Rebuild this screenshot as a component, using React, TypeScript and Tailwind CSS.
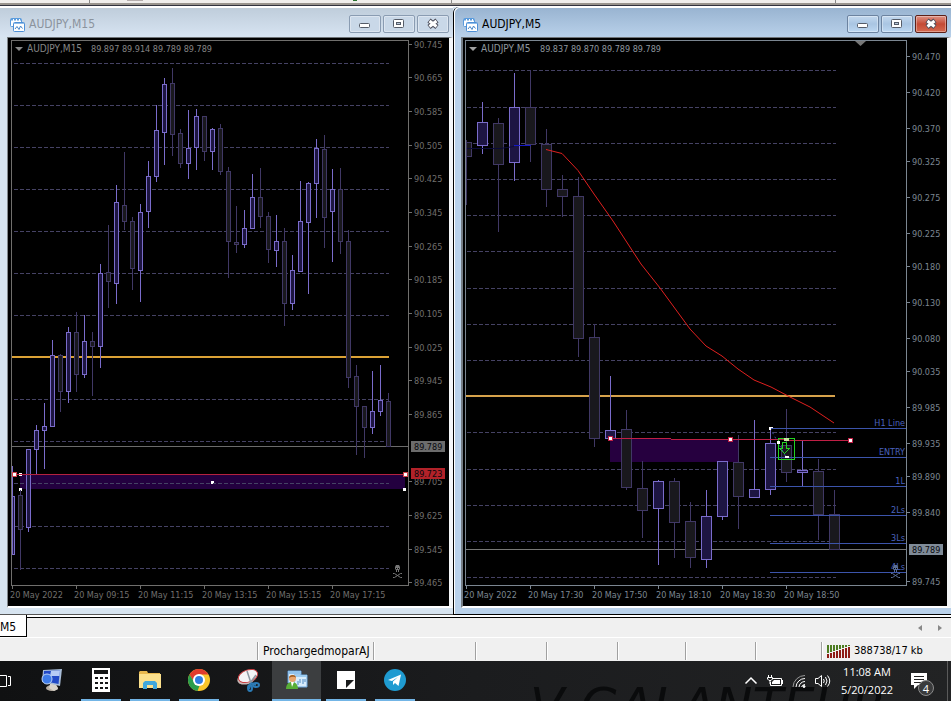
import React from 'react';
import clsx from 'clsx';

type Candle = [high: number, top: number, bottom: number, low: number, up: 0 | 1];
type Label = [position: number, text: string];

const m15Candles: Candle[] = [
  [466, 496, 554, 554, 1], [489, 495, 529, 569, 0], [449, 449, 527, 531, 1], [425, 430, 449, 473, 1],
  [403, 426, 430, 468, 1], [340, 355, 426, 426, 1], [354, 355, 391, 411, 0], [327, 332, 391, 402, 1],
  [312, 332, 374, 391, 0], [315, 341, 374, 377, 1], [332, 341, 346, 395, 0], [264, 273, 346, 367, 1],
  [225, 272, 281, 307, 0], [185, 202, 283, 303, 1], [152, 205, 221, 229, 0], [217, 221, 268, 289, 0],
  [204, 212, 270, 301, 1], [161, 176, 211, 227, 1], [105, 130, 176, 181, 1], [78, 84, 132, 164, 1],
  [68, 83, 134, 155, 0], [129, 133, 163, 167, 0], [110, 148, 163, 178, 1], [109, 116, 147, 169, 1],
  [116, 116, 151, 160, 0], [128, 129, 151, 169, 1], [124, 128, 171, 174, 0], [167, 171, 241, 277, 0],
  [206, 242, 244, 252, 0], [210, 228, 244, 247, 1], [174, 197, 228, 228, 1], [168, 197, 216, 227, 0],
  [212, 216, 249, 262, 0], [215, 241, 250, 266, 1], [228, 241, 303, 325, 0], [255, 270, 303, 309, 1],
  [181, 221, 271, 271, 1], [182, 183, 222, 293, 1], [139, 148, 183, 217, 1], [135, 149, 217, 247, 0],
  [169, 189, 211, 261, 1], [168, 189, 241, 253, 0], [230, 241, 377, 387, 0], [365, 376, 406, 454, 0],
  [406, 406, 427, 457, 0], [371, 411, 427, 433, 1], [365, 400, 411, 415, 1], [393, 401, 446, 446, 0],
];

const m5Candles: Candle[] = [
  [140, 142, 156, 204, 0], [102, 122, 145, 153, 1], [118, 123, 164, 231, 0], [73, 107, 162, 180, 1],
  [70, 107, 144, 161, 0], [129, 144, 189, 206, 0], [175, 189, 196, 216, 0], [177, 196, 338, 356, 0],
  [324, 337, 438, 446, 0], [376, 430, 438, 438, 1], [410, 429, 487, 489, 0], [461, 488, 510, 537, 0],
  [480, 481, 508, 564, 1], [478, 481, 522, 557, 0], [502, 521, 557, 567, 0], [490, 516, 559, 567, 1],
  [461, 461, 516, 519, 1], [435, 462, 496, 528, 0], [420, 489, 497, 497, 1], [428, 443, 489, 494, 1],
  [409, 445, 472, 481, 0], [440, 470, 472, 486, 1], [459, 471, 514, 539, 0], [490, 514, 549, 549, 0],
];

const m15Grid = [63, 105, 147, 189, 231, 273, 315, 399, 441, 483, 526, 568];
const m5Grid = [70, 107, 143, 179, 215, 251, 288, 324, 360, 432, 469, 505, 541, 577];

const m15Prices: Label[] = [
  [44, '90.745'], [77, '90.665'], [111, '90.585'], [145, '90.505'], [178, '90.425'], [212, '90.345'],
  [246, '90.265'], [279, '90.185'], [313, '90.105'], [347, '90.025'], [380, '89.945'], [414, '89.865'],
  [481, '89.705'], [515, '89.625'], [549, '89.545'], [582, '89.465'],
];
const m5Prices: Label[] = [
  [56, '90.470'], [92, '90.420'], [128, '90.370'], [161, '90.325'], [197, '90.275'], [233, '90.225'],
  [266, '90.180'], [302, '90.130'], [338, '90.080'], [371, '90.035'], [407, '89.985'], [443, '89.935'],
  [476, '89.890'], [512, '89.840'], [581, '89.745'],
];

const m15Times: Label[] = [
  [12, '20 May 2022'], [76, '20 May 09:15'], [140, '20 May 11:15'],
  [204, '20 May 13:15'], [268, '20 May 15:15'], [332, '20 May 17:15'],
];
const m5Times: Label[] = [
  [466, '20 May 2022'], [530, '20 May 17:30'], [594, '20 May 17:50'],
  [658, '20 May 18:10'], [722, '20 May 18:30'], [786, '20 May 18:50'],
];

const levels: Label[] = [
  [428, 'H1 Line'], [457, 'ENTRY'], [486, '1L'], [515, '2Ls'], [543, '3Ls'], [572, '4Ls'],
];

const chartFont = "font-['DejaVu_Sans_Condensed','Noto_Sans',sans-serif] text-[9px]";
const uiFont = "font-['DejaVu_Sans_Condensed','Noto_Sans',sans-serif]";

const Candles: React.FC<{ data: Candle[]; start: number; step: number; half: number }> = ({ data, start, step, half }) => (
  <g shapeRendering="crispEdges">
    {data.map(([high, top, bottom, low, up], i) => {
      const x = start + i * step;
      const left = i === 0 ? x : x - half;
      const stroke = up ? '#7a6ccb' : '#403865';
      return (
        <g key={i}>
          <rect x={x} y={high} width={1} height={low - high + 1} fill={stroke} />
          <rect
            x={left + 0.5}
            y={top + 0.5}
            width={x + half - left}
            height={Math.max(bottom - top, 1)}
            fill={up ? '#1d1542' : '#19181d'}
            stroke={stroke}
          />
        </g>
      );
    })}
  </g>
);

const Grid: React.FC<{ rows: number[]; from: number; to: number }> = ({ rows, from, to }) => (
  <g stroke="#454264" strokeDasharray="4 2" shapeRendering="crispEdges">
    {rows.map(y => (
      <line key={y} x1={from} x2={to} y1={y + 0.5} y2={y + 0.5} />
    ))}
  </g>
);

interface AxesProps {
  left: number;
  right: number;
  prices: Label[];
  times: Label[];
  color: string;
}

const Axes: React.FC<AxesProps> = ({ left, right, prices, times, color }) => (
  <g>
    <g fill="none" stroke={color} shapeRendering="crispEdges">
      <path d={`M${left + 0.5} 585.5V40.5H${right + 0.5}V585.5Z`} />
      {prices.map(([y]) => (
        <path key={y} d={`M${right} ${y + 0.5}h4`} />
      ))}
      {times.map(([x]) => (
        <path key={x} d={`M${x + 0.5} 585v4`} />
      ))}
    </g>
    <g fill={color}>
      {prices.map(([y, text]) => (
        <text key={y} x={right + 6} y={y + 4}>{text}</text>
      ))}
      {times.map(([x, text]) => (
        <text key={x} x={x - 2} y={598}>{text}</text>
      ))}
    </g>
  </g>
);

const PriceTag: React.FC<{ x: number; y: number; fill: string; text: string }> = ({ x, y, fill, text }) => (
  <g>
    <rect x={x} y={y} width={34} height={11} fill={fill} />
    <text x={x + 3} y={y + 9} fill="#08080c">{text}</text>
  </g>
);

const Handle: React.FC<{ x: number; y: number; stroke?: string }> = ({ x, y, stroke = 'none' }) => (
  <rect x={x - 1.5} y={y - 1.5} width={4} height={4} fill="#fff" stroke={stroke} shapeRendering="crispEdges" />
);

const Skull: React.FC<{ x: number; y: number; color: string }> = ({ x, y, color }) => (
  <g transform={`translate(${x} ${y})`} fill="none" stroke={color}>
    <path d="M2 2L3 0H6L7 2V4L6 5V7H3V5L2 4Z" fill={color} stroke="none" />
    <path d="M3 3.500h1M5 3.500h1M4.500 5v2" stroke="#000" />
    <path d="M0 8.500h1.500L7.500 12.500H9M9 8.500H7.500L1.500 12.500H0" />
  </g>
);

const M15Chart: React.FC = () => (
  <svg viewBox="8 38 441 568" className={clsx('block h-auto w-full bg-black', chartFont)} role="img" aria-label="AUDJPY M15 chart">
    <rect x={20} y={474} width={385} height={15} fill="#23003f" />
    <Grid rows={m15Grid} from={14} to={389} />
    <rect x={12} y={356} width={377} height={2} fill="#dba236" />
    <rect x={12} y={446} width={396} height={1} fill="#6b6b6b" />
    <Candles data={m15Candles} start={12} step={8} half={2} />
    <rect x={12} y={474} width={393} height={1} fill="#b5223f" />
    <Handle x={14} y={474} stroke="#d0404a" />
    <Handle x={405} y={474} stroke="#d0404a" />
    <path d="M19 473h3v1h-3ZM19 475h3v1h-3ZM19 488h3v3h-1v-1h-1v1h-1ZM211 481h3v2h-1v1h-2ZM403 488h3v3h-3Z" fill="#fff" />
    <Axes left={11} right={408} prices={m15Prices} times={m15Times} color="#706f6d" />
    <PriceTag x={411} y={441} fill="#6c6c6c" text="89.789" />
    <PriceTag x={411} y={468} fill="#b22229" text="89.723" />
    <path d="M15 47h8l-4 4Z" fill="#8a8a8a" />
    <g fill="#858585">
      <text x={27} y={52} className="text-[10px]">AUDJPY,M15</text>
      <text x={91} y={52}>89.897 89.914 89.789 89.789</text>
    </g>
    <Skull x={393} y={565} color="#777" />
  </svg>
);

const M5Chart: React.FC = () => (
  <svg viewBox="463 38 484 568" className={clsx('block h-auto w-full bg-black', chartFont)} role="img" aria-label="AUDJPY M5 chart">
    <Grid rows={m5Grid} from={467} to={836} />
    <rect x={610} y={439} width={128} height={23} fill="#26003f" />
    <rect x={466} y={395} width={369} height={2} fill="#d6a24b" />
    <rect x={466} y={549} width={440} height={1} fill="#777" />
    <Candles data={m5Candles} start={466} step={16} half={5} />
    <path d="M467 148.500H500L514 146.500" fill="none" stroke="#0b0b38" />
    <path d="M514 145.500H531" stroke="#1418c8" />
    <path
      d="M546 149.500L562 153.500L578 170.500L594 194L613 221L641 264L660 288L690 329L706 346L722 356L738 369L754 380L771 387L790 397L810 407L834 423"
      fill="none"
      stroke="#e0201f"
    />
    {levels.map(([y, text]) => (
      <g key={text}>
        <rect x={770} y={y} width={136} height={1} fill="#3c54ab" />
        <text x={905} y={y - 2} textAnchor="end" fill="#4a62bd">{text}</text>
      </g>
    ))}
    <g stroke="#c01f45" shapeRendering="crispEdges">
      <path d="M610 438.500H671M785 440.500H850" />
      <path d="M671 439.500H785" />
    </g>
    <Handle x={610} y={438} stroke="#c01f45" />
    <Handle x={730} y={439} stroke="#c01f45" />
    <Handle x={850} y={440} stroke="#c01f45" />
    <path d="M770 428L786 457" stroke="#3c54ab" strokeDasharray="2 3" />
    <g fill="none" stroke="#22d322" shapeRendering="crispEdges">
      <rect x={778.5} y={438.500} width={16} height={21} />
      <path d="M782.500 442.500H786.500V448.500H789.500L784.500 453.500L779.500 448.500H782.500Z" />
    </g>
    <path d="M769 427h4v1h-2v2h-2ZM777 441h3v3h-3ZM785 456h4v2h-4Z" fill="#fff" />
    <rect x={784} y={438} width={5} height={3} fill="#c8e6a0" />
    <Axes left={465} right={906} prices={m5Prices} times={m5Times} color="#7b8691" />
    <PriceTag x={909} y={544} fill="#7f8b98" text="89.789" />
    <path d="M855 41h11l-5.500 5Z" fill="#777" />
    <path d="M469 47h8l-4 4Z" fill="#a0a0a0" />
    <g fill="#8e979f">
      <text x={481} y={52} className="text-[10px]">AUDJPY,M5</text>
      <text x={540} y={52}>89.837 89.870 89.789 89.789</text>
    </g>
    <Skull x={891} y={565} color="#5a6d95" />
  </svg>
);

const ChartIcon: React.FC = () => (
  <svg width="15" height="15" viewBox="0 0 15 15" fill="none" aria-hidden="true">
    <rect x=".5" y="1.500" width="11" height="8" rx="1" fill="#fff" stroke="#5b9bdc" />
    <path d="M1 2.500h10" stroke="#5b9bdc" strokeWidth="2" strokeDasharray="2 1" />
    <rect x="3.500" y="5.500" width="11" height="9" rx="1" fill="#fff" stroke="#4d8fd6" />
    <path d="M4 6.500h10" stroke="#8fbdea" />
    <path d="M5 12L7 9.500L9 12.500L10.500 9L12.500 11.500" stroke="#4384c8" />
  </svg>
);

const WindowButtons: React.FC<{ active?: boolean }> = ({ active }) => {
  const base = 'flex h-[18px] w-8 items-center justify-center rounded-[2px] border shadow-[inset_0_0_0_1px_rgba(255,255,255,0.35)]';
  const plain = active
    ? 'border-[#6c83a0] bg-linear-to-b from-[#c3d8ee] via-[#a9c5e2] to-[#bdd8f2]'
    : 'border-[#8a9cb2] bg-[#c9d8e8]';
  return (
    <div className="flex gap-[2px]">
      <button type="button" aria-label="Minimize" className={clsx(base, plain)}>
        <svg width="12" height="12" viewBox="0 0 12 12" aria-hidden="true">
          <rect x=".5" y="5.500" width="10" height="4" rx="1" fill="#fff" stroke="#555c68" />
        </svg>
      </button>
      <button type="button" aria-label="Restore" className={clsx(base, plain)}>
        <svg width="12" height="12" viewBox="0 0 12 12" aria-hidden="true">
          <rect x=".5" y="1.500" width="10" height="8" rx="1" fill="#fff" stroke="#555c68" />
          <rect x="3.500" y="4.500" width="4" height="2" fill="#b8c8da" stroke="#555c68" />
        </svg>
      </button>
      <button
        type="button"
        aria-label="Close"
        className={clsx(base, active ? 'border-[#5d2018] bg-linear-to-b from-[#dd9184] via-[#c44a35] to-[#d5694f]' : plain)}
      >
        <svg width="12" height="12" viewBox="0 0 12 12" aria-hidden="true">
          <path d="M2 2.500L10 9M10 2.500L2 9" stroke="#4c4e5b" strokeWidth="5" />
          <path d="M2.500 3L9.500 8.500M9.500 3L2.500 8.500" stroke="#fff" strokeWidth="3" />
        </svg>
      </button>
    </div>
  );
};

interface ChartWindowProps {
  title: string;
  active?: boolean;
  children: React.ReactNode;
}

const ChartWindow: React.FC<ChartWindowProps> = ({ title, active, children }) => (
  <section
    className={clsx(
      'flex flex-col border-b',
      active ? 'rounded-tl-md border-l border-black bg-[#b9d1ea]' : 'border-[#555] bg-[#d7e4f0]',
    )}
  >
    <header
      className={clsx(
        'flex h-[30px] items-center border-t border-white pt-[3px] pr-1',
        active
          ? 'rounded-tl-md border-l bg-linear-to-b from-[#99b4d1] to-[#b9d1ea] pl-2'
          : 'bg-linear-to-b from-[#bfcddb] to-[#d7e4f2] pl-[10px]',
      )}
    >
      <ChartIcon />
      <h2 className={clsx('ml-1 flex-1 text-xs', uiFont, active ? 'text-black' : 'text-[#8b939d]')}>{title}</h2>
      <WindowButtons active={active} />
    </header>
    <div className={clsx('pb-[6px]', active ? 'border-l border-white pl-[6px]' : 'pl-[7px]')}>
      <div
        className={clsx(
          'border-t border-r-4 border-b-2 border-t-[#6f7478] border-r-[#f4f6f8] border-b-white',
          active ? 'border-l-2 border-l-[#747c84]' : 'border-l border-l-[#83888c]',
        )}
      >
        {children}
      </div>
    </div>
  </section>
);

const Signal: React.FC = () => (
  <svg width="24" height="14" viewBox="0 0 24 14" shapeRendering="crispEdges" aria-hidden="true">
    {[0, 1, 2, 3, 4, 5, 6, 7].map(i => (
      <g key={i}>
        <rect x={i * 3} y={1} width={2} height={8 - i} fill="#4d7d21" />
        <rect x={i * 3} y={10 - i} width={2} height={4 + i} fill="#8f1c16" />
      </g>
    ))}
  </svg>
);

const ComputerIcon = () => (
  <svg width="24" height="26" viewBox="0 0 24 26">
    <ellipse cx="12" cy="21" rx="6" ry="3" fill="#b9b0a4" />
    <path d="M10 17h6l2 5-4 2-5-3Z" fill="#d9d3ca" />
    <path d="M3 3L22 2L20 19L2 15Z" fill="#a9bdd8" />
    <path d="M4 4L20 3.500L18.500 17L3.500 14Z" fill="#2149c6" />
    <path d="M11 4L20 3.500L19.500 9L10 9Z" fill="#b6cbf5" />
    <circle cx="7" cy="12" r="5" fill="#3e7be8" stroke="#bcd3f7" />
  </svg>
);

const CalculatorIcon = () => (
  <svg width="18" height="24" viewBox="0 0 18 24">
    <path d="M0 0h18v24H0Z" fill="#fff" />
    <path d="M2 2h14v4H2Z" fill="#151617" />
    <path d="M3 10h3M8 10h3M13 10h3M3 15h3M8 15h3M13 15h3M3 20h3M8 20h3M13 20h3" stroke="#151617" strokeWidth="2" />
  </svg>
);

const FolderIcon = () => (
  <svg width="22" height="20" viewBox="0 0 22 20">
    <path d="M0 2L1 1H8L9 3H21V18H0Z" fill="#e8b84e" />
    <path d="M0 4H22V18H0Z" fill="#fbe08c" />
    <path d="M4 19V13L6 11H16L18 13V19H14V15H8V19Z" fill="#3fa7dc" />
  </svg>
);

const ChromeIcon = () => (
  <svg width="24" height="24" viewBox="0 0 24 24">
    <circle cx="12" cy="12" r="11" fill="#f9c62c" />
    <path d="M12 12L2.500 6.500A11 11 0 0 1 21.500 6.500H12Z" fill="#e23b2e" />
    <path d="M2.500 6.500L8 15.500L12 7Z" fill="#e23b2e" />
    <path d="M2.500 6.500L8 15.500L13 16.500L10.500 23A11 11 0 0 1 2.500 6.500Z" fill="#2a9d4c" />
    <circle cx="12" cy="12" r="6" fill="#fff" />
    <circle cx="12" cy="12" r="4" fill="#2f7de0" />
  </svg>
);

const SnipIcon = () => (
  <svg width="24" height="24" viewBox="0 0 24 24" fill="none">
    <ellipse cx="11" cy="10" rx="10" ry="6" transform="rotate(-20 11 10)" fill="#c9b8b6" />
    <ellipse cx="12" cy="8" rx="10" ry="6" transform="rotate(-20 12 8)" fill="#f4f4f6" stroke="#c83f42" />
    <path d="M11 3L15 15M20 7L14 15" stroke="#8d98a3" strokeWidth="1.500" />
    <path d="M15 15L13 21M15 15L20 17" stroke="#2b7bb5" strokeWidth="2" />
    <ellipse cx="14" cy="20" rx="2" ry="3" stroke="#2b7bb5" strokeWidth="2" />
    <ellipse cx="20" cy="17" rx="3" ry="2" stroke="#2b7bb5" strokeWidth="2" />
  </svg>
);

const TerminalIcon = () => (
  <svg width="22" height="22" viewBox="0 0 22 22">
    <path d="M2 2H15V14H2Z" fill="#d6e9f8" stroke="#5b95d0" />
    <path d="M2 2H15V5H2Z" fill="#8fc0ea" />
    <path d="M8 6H21V18H8Z" fill="#d8ecfb" stroke="#6ba6dc" />
    <path d="M8 6H21V8H8Z" fill="#9ccbf0" />
    <path d="M12 16V12M14 14V10M17 15V10M19 13V10" stroke="#4f8ac2" />
    <path d="M0 20C0 14 4 13 6 13S12 14 12 20Z" fill="#58ad36" />
    <path d="M5 13L6 18L8 13Z" fill="#fff" />
    <circle cx="6.500" cy="9.500" r="3.500" fill="#e9a56d" />
    <path d="M3 9C3 5 10 5 10 9C8 7 5 8 3 9Z" fill="#9d5a1f" />
  </svg>
);

const StickyIcon = () => (
  <svg width="18" height="18" viewBox="0 0 18 18">
    <path d="M0 0H18V18H0Z" fill="#fff" />
    <path d="M9 17V9H17Z" fill="#1a1b1c" />
  </svg>
);

const TelegramIcon = () => (
  <svg width="22" height="22" viewBox="0 0 22 22">
    <circle cx="11" cy="11" r="11" fill="#1f9bd1" />
    <path d="M4 11L17 5.500L14.500 17L11 14L9 16V12.500L14 8L8 12Z" fill="#fff" />
  </svg>
);

const apps = [
  { name: 'Remote Desktop', icon: ComputerIcon, running: false },
  { name: 'Calculator', icon: CalculatorIcon, running: true },
  { name: 'File Explorer', icon: FolderIcon, running: true },
  { name: 'Chrome', icon: ChromeIcon, running: true },
  { name: 'Snipping Tool', icon: SnipIcon, running: false },
  { name: 'Trading Terminal', icon: TerminalIcon, running: true, active: true },
  { name: 'Sticky Notes', icon: StickyIcon, running: true },
  { name: 'Telegram', icon: TelegramIcon, running: true },
];

const Taskbar: React.FC = () => (
  <footer className="relative flex h-10 overflow-hidden bg-linear-to-r from-[#101112] via-[#1b1c1e] to-[#222324] text-white">
    {/* Wallpaper lettering that shows through the bar */}
    <div
      aria-hidden="true"
      className="pointer-events-none absolute top-5 left-[530px] font-['DejaVu_Sans',sans-serif] text-[50px] leading-none whitespace-nowrap text-[#0a0b0c] italic"
    >
      V GALANTEUR
    </div>
    <button type="button" aria-label="Task View" className="w-[27px]">
      <svg width="12" height="16" viewBox="0 0 12 16" fill="none" stroke="#fff" aria-hidden="true">
        <path d="M0 2.500H6.500V13.500H0M8 3.500H10.500V12.500H8" />
      </svg>
    </button>
    {apps.map(({ name, icon: Icon, running, active }) => (
      <button
        key={name}
        type="button"
        aria-label={name}
        className={clsx('flex w-[49px] flex-col items-center', active && 'bg-[#3c3e40]')}
      >
        <span className="flex flex-1 items-center">
          <Icon />
        </span>
        <span className={clsx('h-[2px]', active ? 'w-full' : 'w-10', running && 'bg-[#73b5e6]')} />
      </button>
    ))}
    <div className="relative ml-auto flex items-center">
      <button type="button" aria-label="Show hidden icons" className="mr-2">
        <svg width="14" height="10" viewBox="0 0 14 10" fill="none" stroke="#fff" aria-hidden="true">
          <path d="M1.500 7.500L7 2L12.500 7.500" strokeWidth="1.500" />
        </svg>
      </button>
      <button type="button" aria-label="Battery" className="mr-2">
        <svg width="18" height="14" viewBox="0 0 18 14" fill="none" stroke="#fff" aria-hidden="true">
          <path d="M7 4.500H15.500V11.500H4.500V8M16.500 6v4" />
          <path d="M8 6H14V10H6V8Z" fill="#fff" stroke="none" />
          <path d="M2.500 1v2M5.500 1v2M1.500 3.500H6.500V5L5 6.500H3L1.500 5ZM4 7V10" />
        </svg>
      </button>
      <button type="button" aria-label="Network" className="mr-2">
        <svg width="14" height="14" viewBox="0 0 14 14" fill="none" stroke="#fff" aria-hidden="true">
          <path d="M1 13A12 12 0 0 1 13 1.500" stroke="#999" />
          <path d="M4 13A9 9 0 0 1 13 4.500M7 13A6 6 0 0 1 13 7.500M9.500 13A4 4 0 0 1 13 10.500" />
          <circle cx="12" cy="12.500" r="1" fill="#fff" />
        </svg>
      </button>
      <button type="button" aria-label="Volume" className="mr-2">
        <svg width="18" height="14" viewBox="0 0 18 14" fill="none" stroke="#fff" aria-hidden="true">
          <path d="M1.500 4.500H4L7.500 1.500V12.500L4 9.500H1.500Z" />
          <path d="M9.500 5Q11 7 9.500 9M11.500 3Q14.500 7 11.500 11M13.500 1.500Q18 7 13.500 12.500" />
        </svg>
      </button>
      <div className="w-[54px] text-center font-['Open_Sans','Noto_Sans',sans-serif] text-[11px] leading-[18px]">
        <div>11:08 AM</div>
        <div>5/20/2022</div>
      </div>
      <button type="button" aria-label="4 notifications" className="relative mr-3 ml-4 h-10 w-[25px]">
        <svg width="18" height="18" viewBox="0 0 18 18" aria-hidden="true">
          <path d="M1 1H17V13H8L4 17V13H1Z" fill="#fff" />
          <path d="M4 4.500H14M4 7.500H14M4 10.500H11" stroke="#222" />
        </svg>
        <span className="absolute top-[19px] left-2 flex size-4 items-center justify-center rounded-full border border-[#8c8c8c] bg-[#3a3b3c] font-['Open_Sans','Noto_Sans',sans-serif] text-[11px] leading-none">
          4
        </span>
      </button>
      <span className="h-full w-1 border-l border-[#5a5a5a]" />
    </div>
  </footer>
);

const divider = 'border-l border-[#a0a0a0] shadow-[inset_1px_0_0_white]';

const App: React.FC = () => (
  <div className="flex min-h-screen flex-col bg-[#f0f0f0]">
    {/* Lower edge of the toolbar */}
    <div className="flex h-[7px] flex-col bg-white">
      <div className="flex h-[3px] bg-[#f0eeec]">
        <span className="ml-[89px] border-l border-[#888]" />
        <span className="ml-[37px] h-px w-4 bg-[#b5adad]" />
        <span className="ml-[210px] h-px w-1 bg-[#28702c]" />
        <span className="ml-[94px] border-l border-[#888]" />
        <span className="ml-auto mr-[115px] border-l border-[#888]" />
      </div>
      <div className="h-[2px] bg-[#98938d]" />
      <div className="h-px bg-[#31323f]" />
    </div>

    <main className="grid grid-cols-[453fr_498fr] bg-[#dbe6f0]">
      <ChartWindow title="AUDJPY,M15">
        <M15Chart />
      </ChartWindow>
      <ChartWindow title="AUDJPY,M5" active>
        <M5Chart />
      </ChartWindow>
    </main>

    {/* Chart tabs */}
    <nav className={clsx('flex h-[23px] border-b border-white bg-white text-xs text-black', uiFont)}>
      <button type="button" className="w-[27px] border-r border-b border-black bg-white pt-[3px] pr-3 text-left">
        M5
      </button>
      <div className="mt-[2px] flex flex-1 items-center justify-end gap-4 border-t border-black bg-[#f0f0f0] pr-[9px]">
        <button type="button" aria-label="Previous tabs">
          <svg width="4" height="6" viewBox="0 0 4 6" aria-hidden="true">
            <path d="M4 0V6L0 3Z" fill="#888" />
          </svg>
        </button>
        <button type="button" aria-label="Next tabs">
          <svg width="4" height="6" viewBox="0 0 4 6" aria-hidden="true">
            <path d="M0 0V6L4 3Z" fill="#888" />
          </svg>
        </button>
      </div>
    </nav>

    {/* Status bar */}
    <div
      className={clsx(
        'grid h-[23px] grid-cols-[257fr_116fr_102fr_71fr_71fr_68fr_70fr_66fr_130fr] pt-1 pb-px text-xs leading-[18px] whitespace-nowrap text-black',
        uiFont,
      )}
    >
      <span />
      <span className={clsx(divider, 'min-w-0 pl-[5px]')}>ProchargedmoparAJ</span>
      <span className={divider} />
      <span className={divider} />
      <span className={divider} />
      <span className={divider} />
      <span className={divider} />
      <span className={divider} />
      <span className={clsx(divider, 'flex min-w-0 items-center gap-[3px] pl-[5px] text-[11px]')}>
        <Signal />
        388738/17 kb
      </span>
    </div>

    <Taskbar />
  </div>
);

export default App;
